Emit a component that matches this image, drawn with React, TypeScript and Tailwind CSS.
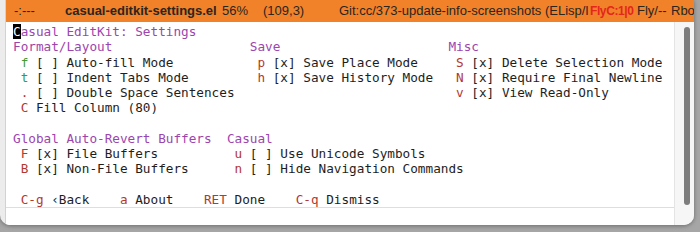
import React from "react";

// transient menu for casual-editkit settings, as shown inside an Emacs frame
type Seg = { t: string; c?: "key" | "head" | "green" | "cursor" };

const mono = { fontFamily: '"DejaVu Sans Mono", "Liberation Mono", monospace' };

const lines: Seg[][] = [
  [{ t: "C", c: "cursor" }, { t: "asual EditKit: Settings", c: "head" }],
  [
    { t: "Format/Layout", c: "head" },
    { t: "                  " },
    { t: "Save", c: "head" },
    { t: "                      " },
    { t: "Misc", c: "head" },
  ],
  [
    { t: " " }, { t: "f", c: "green" }, { t: " [ ] Auto-fill Mode          " },
    { t: " " }, { t: "p", c: "key" }, { t: " [x] Save Place Mode    " },
    { t: " " }, { t: "S", c: "key" }, { t: " [x] Delete Selection Mode" },
  ],
  [
    { t: " " }, { t: "t", c: "green" }, { t: " [ ] Indent Tabs Mode        " },
    { t: " " }, { t: "h", c: "key" }, { t: " [x] Save History Mode  " },
    { t: " " }, { t: "N", c: "key" }, { t: " [x] Require Final Newline" },
  ],
  [
    { t: " " }, { t: ".", c: "key" }, { t: " [ ] Double Space Sentences" },
    { t: "                            " },
    { t: " " }, { t: "v", c: "key" }, { t: " [x] View Read-Only" },
  ],
  [{ t: " " }, { t: "C", c: "key" }, { t: " Fill Column (80)" }],
  [{ t: " " }],
  [
    { t: "Global Auto-Revert Buffers", c: "head" },
    { t: "  " },
    { t: "Casual", c: "head" },
  ],
  [
    { t: " " }, { t: "F", c: "key" }, { t: " [x] File Buffers         " },
    { t: " " }, { t: "u", c: "key" }, { t: " [ ] Use Unicode Symbols" },
  ],
  [
    { t: " " }, { t: "B", c: "key" }, { t: " [x] Non-File Buffers     " },
    { t: " " }, { t: "n", c: "key" }, { t: " [ ] Hide Navigation Commands" },
  ],
  [{ t: " " }],
  [
    { t: " " }, { t: "C-g", c: "key" }, { t: " \u2039Back    " },
    { t: "a", c: "key" }, { t: " About    " },
    { t: "RET", c: "key" }, { t: " Done    " },
    { t: "C-q", c: "key" }, { t: " Dismiss" },
  ],
];

function segClass(c?: Seg["c"]) {
  if (c === "key") return "text-[#b3382e]";
  if (c === "head") return "text-[#9c45ae]";
  if (c === "green") return "text-[#3f9a3a]";
  if (c === "cursor") return "bg-black text-white";
  return "";
}

function ModeLine() {
  return (
    <div
      className="flex h-[22px] shrink-0 items-center overflow-hidden whitespace-nowrap bg-[#f1822a] pl-[8px] text-[13px] text-[#2b2520]"
      style={{ fontFamily: '"Liberation Sans", Arial, sans-serif' }}
    >
      <span className="w-[51px] shrink-0">-:---</span>
      <span className="w-[157px] shrink-0 font-bold">casual-editkit-settings.el</span>
      <span className="w-[41px] shrink-0">56%</span>
      <span className="w-[76px] shrink-0">(109,3)</span>
      <span className="w-[206px] shrink-0">Git:cc/373-update-info-screenshots</span>
      <span className="w-[45px] shrink-0 overflow-hidden">(ELisp/l</span>
      <span className="w-[47px] shrink-0 text-[12px] font-bold tracking-[-0.4px] text-[#e4261c]">FlyC:1|0</span>
      <span className="w-[34px] shrink-0">Fly/--</span>
      <span className="shrink-0">Rbo</span>
    </div>
  );
}

export default function App() {
  return (
    <div className="h-[232px] w-[700px] overflow-hidden bg-[#a6a6a6]">
      <div className="flex h-[225px] w-[694px] overflow-hidden rounded-b-[10px] bg-[#ececec] shadow-[0_1px_4px_rgba(0,0,0,0.35)]">
        <div className="w-[5px] shrink-0" />
        <div className="w-px shrink-0 bg-[#d2d2d2]" />
        <div className="flex min-w-0 flex-1 flex-col">
          <ModeLine />
          <div className="flex min-h-0 flex-1">
            <div className="flex min-w-0 flex-1 flex-col bg-white">
              <div
                className="h-[185px] overflow-hidden whitespace-pre pl-[7px] pt-[2px] text-[12.7px] leading-[15.25px] text-[#1e1e1e]"
                style={mono}
              >
                {lines.map((segs, i) => (
                  <div key={i}>
                    {segs.map((s, j) => (
                      <span key={j} className={segClass(s.c)}>
                        {s.t}
                      </span>
                    ))}
                  </div>
                ))}
              </div>
              <div className="h-px bg-[#dedede]" />
              <div className="flex-1 bg-white" />
            </div>
            <div className="flex w-[20px] shrink-0 border-l border-[#e4e4e4] bg-[#f6f6f6] pl-[9px] pt-[5px]">
              <div className="h-[178px] w-[6px] rounded-full bg-[#7d7d7d]" />
            </div>
          </div>
        </div>
      </div>
    </div>
  );
}
